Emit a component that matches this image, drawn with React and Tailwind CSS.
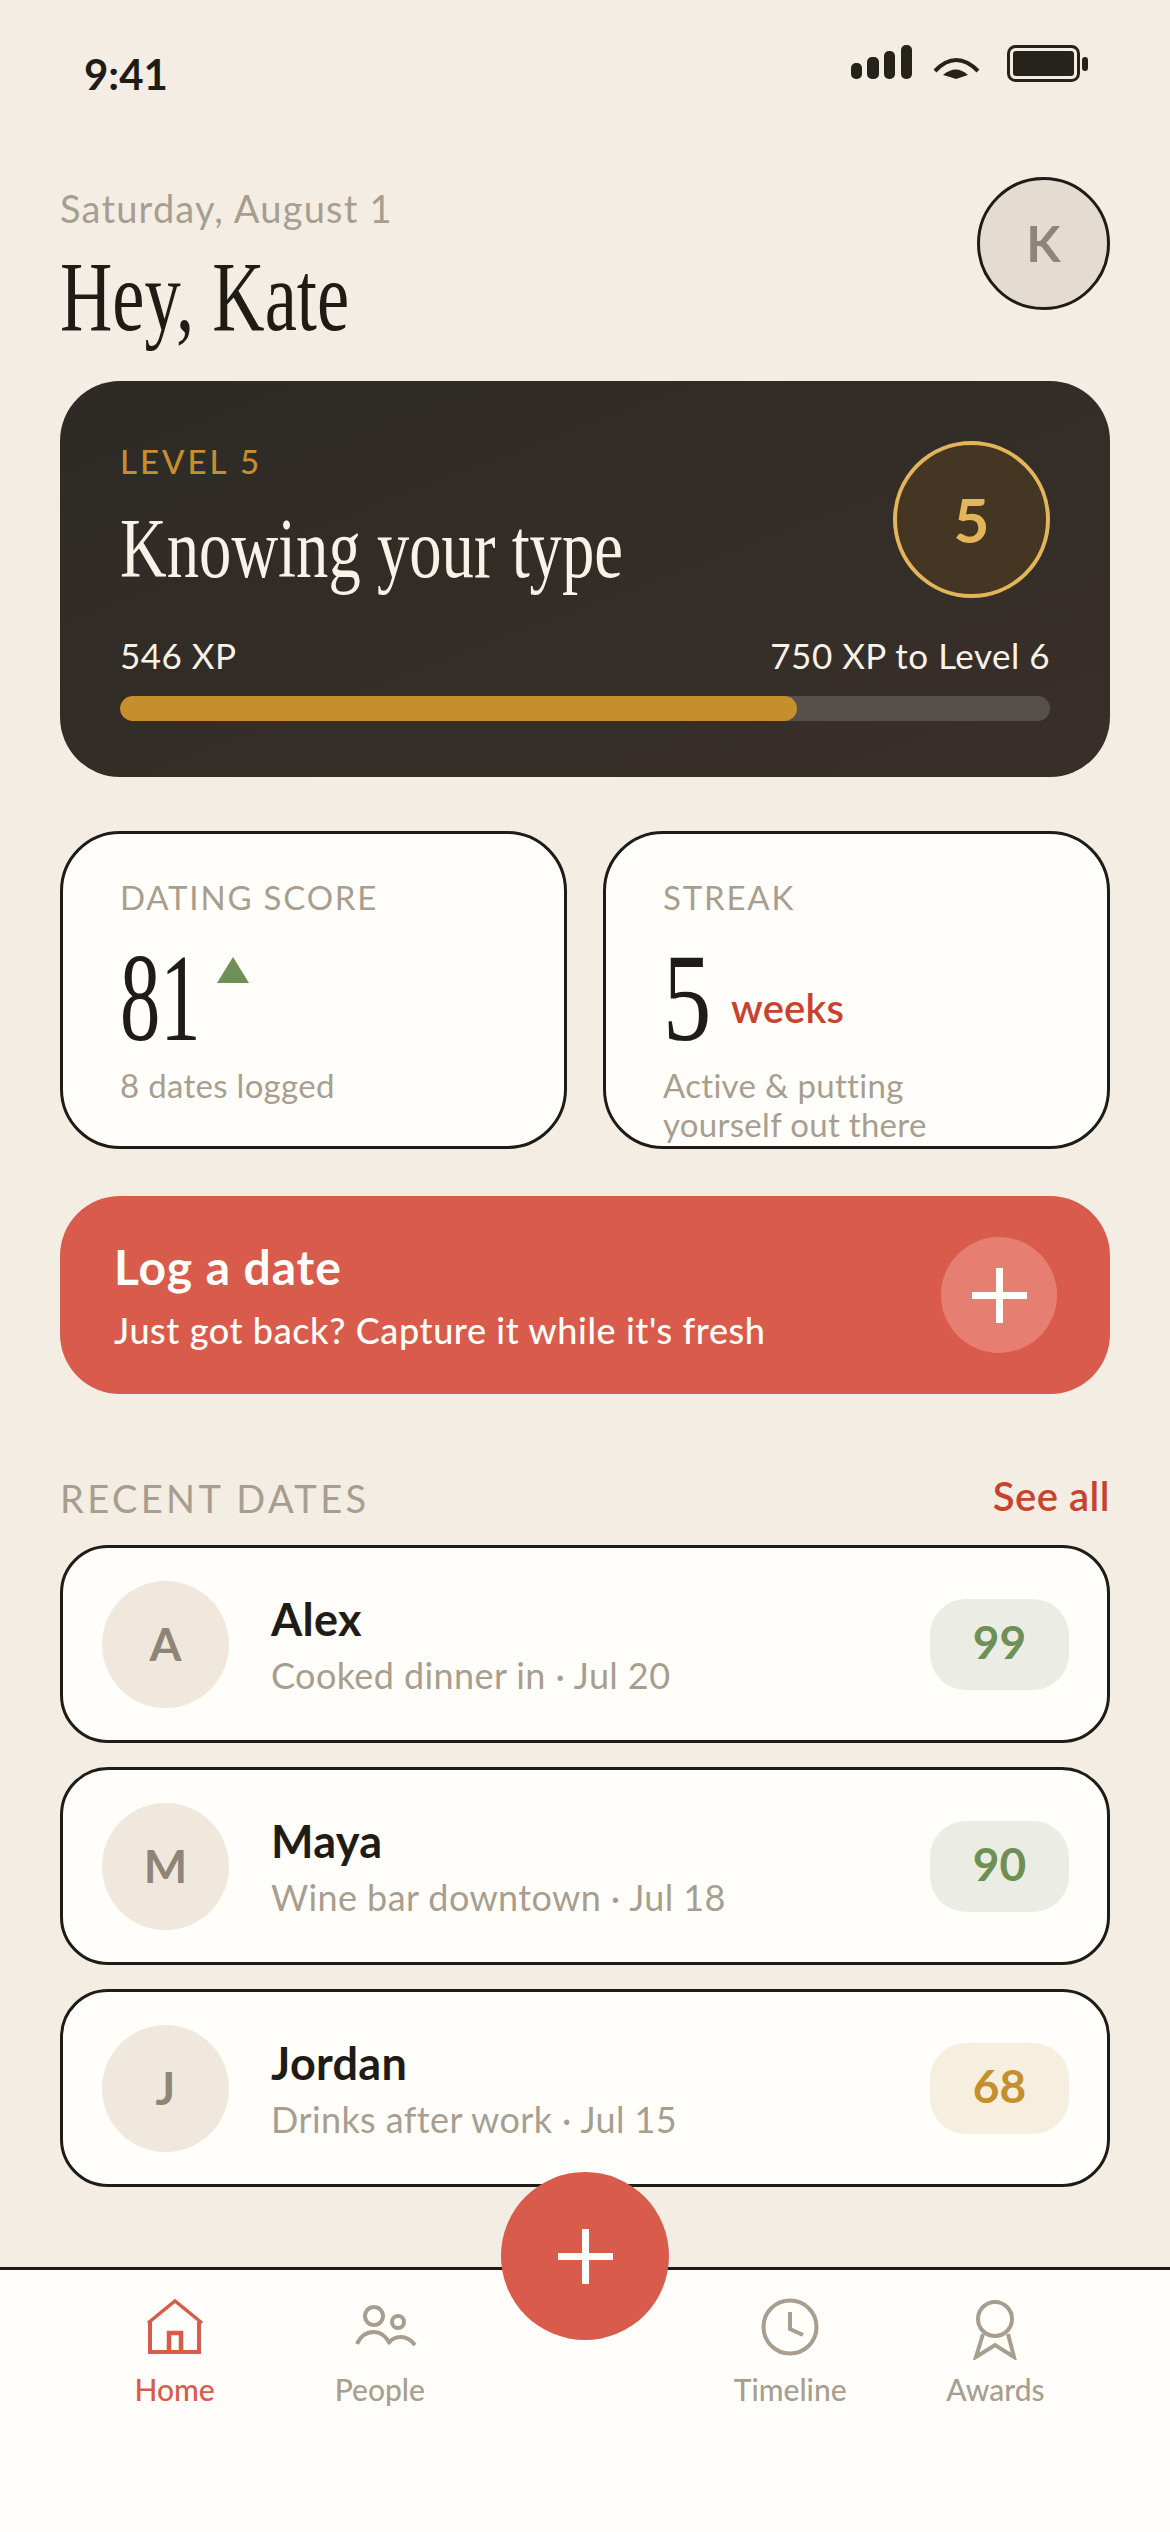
const sans = "font-['Lato','Liberation_Sans',sans-serif]";
const serif = "font-['Liberation_Serif',serif]";

function Serif({ className = "", children }) {
  return <span className={`${serif} inline-block origin-left whitespace-nowrap ${className}`}>{children}</span>;
}

function StatusIcons() {
  return (
    <svg width="240" height="40" viewBox="0 0 240 40" className="text-[#26221c]">
      <rect x="2" y="18" width="11" height="16" rx="5" fill="currentColor" />
      <rect x="18" y="12" width="12" height="22" rx="5" fill="currentColor" />
      <rect x="35" y="6" width="11" height="28" rx="5" fill="currentColor" />
      <rect x="52" y="0" width="11" height="34" rx="5" fill="currentColor" />
      <path d="M86 26 Q107 4 129 26" fill="none" stroke="currentColor" strokeWidth="4" />
      <path d="M94 30 Q107 19 119 30 L113 32 L107 34 L101 32 Z" fill="currentColor" />
      <rect x="159.500" y="1.500" width="70" height="34" rx="7" fill="none" stroke="currentColor" strokeWidth="3" />
      <rect x="164" y="6" width="61" height="25" rx="3" fill="currentColor" />
      <rect x="233" y="12" width="6" height="14" rx="3" fill="currentColor" />
    </svg>
  );
}

function Plus() {
  return (
    <svg width="55" height="55" viewBox="0 0 55 55" fill="none" stroke="#fffefa" strokeWidth="7">
      <path d="M27.500 0V55M0 27.500H55" />
    </svg>
  );
}

function HomeIcon() {
  return (
    <svg width="64" height="64" viewBox="0 0 64 64" fill="none" stroke="#d95b4b" strokeWidth="4">
      <path d="M5 27 L32 5 L59 27" strokeWidth="3.500" />
      <path d="M7 26 V56 H56 V26" />
      <path d="M26 56 V37 H38 V56" strokeWidth="4.500" />
    </svg>
  );
}
function PeopleIcon() {
  return (
    <svg width="64" height="64" viewBox="0 0 64 64" fill="none" stroke="#a89e90" strokeWidth="4" className="overflow-visible">
      <circle cx="26" cy="20" r="9" />
      <circle cx="50" cy="26" r="6" />
      <path d="M9 48 C13 39 20 36 26 36 C32 36 38 40 42 48" />
      <path d="M41 46 C45 42 49 41 53 41 C59 41 63 44 67 49" />
    </svg>
  );
}
function ClockIcon() {
  return (
    <svg width="64" height="64" viewBox="0 0 64 64" fill="none" stroke="#a89e90" strokeWidth="4">
      <circle cx="32" cy="31" r="26.500" />
      <path d="M32 16 V33 L45 39" />
    </svg>
  );
}
function AwardIcon() {
  return (
    <svg width="64" height="64" viewBox="0 0 64 64" fill="none" stroke="#a89e90" strokeWidth="4">
      <circle cx="32" cy="23" r="17" />
      <path d="M20 38 L13 61 L32 49 L51 61 L45 38" />
    </svg>
  );
}

function StatCard({ label, children, note }) {
  return (
    <div className="h-[318px] flex-1 overflow-hidden rounded-[60px] border-[3px] border-[#1f1b16] bg-[#fffefa] pl-[57px] pr-4 pt-[40px]">
      <div className="text-[33px] leading-[46px] tracking-[1.800px] text-[#a89e90]">{label}</div>
      <div className="mt-[20px] flex h-[104px] items-start">{children}</div>
      <div className="mt-[22px] text-[33px] leading-[39px] tracking-[0.300px] text-[#a89e90]">{note}</div>
    </div>
  );
}

function DateRow({ initial, name, detail, score, pill, tone }) {
  return (
    <div className="flex h-[198px] items-center rounded-[48px] border-[3px] border-[#1f1b16] bg-[#fffefa] pl-[39px] pr-[38px]">
      <div className="flex h-[127px] w-[127px] items-center justify-center rounded-full bg-[#f0e8dc] pb-[2px] text-[46px] font-bold text-[#8f8577]">{initial}</div>
      <div className="ml-[42px] flex-1">
        <div className="text-[45px] font-bold leading-[56px] tracking-[0.300px] text-[#1f1b16]">{name}</div>
        <div className="mt-[5px] text-[36px] leading-[46px] tracking-[0.400px] text-[#a89e90]">{detail}</div>
      </div>
      <div className={`flex h-[91px] w-[139px] items-center justify-center rounded-[36px] pb-[5px] text-[46px] font-bold ${pill} ${tone}`}>{score}</div>
    </div>
  );
}

function NavItem({ icon, label, active }) {
  return (
    <div className="flex flex-col items-center">
      {icon}
      <div className={`mt-[9px] text-[30px] font-medium leading-[40px] ${active ? "text-[#d95b4b]" : "text-[#a89e90]"}`}>{label}</div>
    </div>
  );
}

export default function App() {
  return (
    <div className={`${sans} flex h-[2532px] w-[1170px] flex-col overflow-hidden bg-[#f3ede4]`}>
      <div className="flex h-[177px] items-start justify-between pl-[84px] pr-[81px]">
        <div className="mt-[48px] text-[42px] font-bold leading-[52px] text-[#1f1b16]">9:41</div>
        <div className="mt-[45px] h-[40px]"><StatusIcons /></div>
      </div>

      <div className="flex h-[204px] items-start justify-between px-[60px]">
        <div className="pt-[8px]">
          <div className="text-[38px] leading-[46px] tracking-[1.200px] text-[#a89e90]">Saturday, August 1</div>
          <Serif className="mt-[11px] block scale-x-[0.725] text-[100px] leading-[110px] text-[#1f1b16]">Hey, Kate</Serif>
        </div>
        <div className="flex h-[133px] w-[133px] items-center justify-center rounded-full border-[3px] border-[#1f1b16] bg-[#e4dcd0] text-[50px] font-bold text-[#8f8577]">K</div>
      </div>

      <div className="mx-[60px] h-[396px] rounded-[60px] bg-gradient-to-br from-[#2d2a25] to-[#392f2a] px-[60px] pt-[60px]">
        <div className="flex items-start justify-between">
          <div>
            <div className="text-[33px] font-medium leading-[40px] tracking-[3px] text-[#c48f2c]">LEVEL 5</div>
            <Serif className="mt-[18px] block scale-x-[0.77] text-[84px] leading-[100px] text-[#f8f3e9]">Knowing your type</Serif>
          </div>
          <div className="flex h-[157px] w-[157px] items-center justify-center rounded-full border-[4px] border-[#e3b55b] bg-[#443622] text-[62px] font-bold text-[#e3b55b]">5</div>
        </div>
        <div className="mt-[34px] flex justify-between text-[35px] leading-[44px] tracking-[0.500px] text-[#f8f3e9]">
          <span>546 XP</span>
          <span>750 XP to Level 6</span>
        </div>
        <div className="mt-[19px] h-[25px] overflow-hidden rounded-full bg-[#574f4a]">
          <div className="h-full w-[72.800%] rounded-full bg-[#c48f2c]" />
        </div>
      </div>

      <div className="mx-[60px] mt-[54px] flex gap-[36px]">
        <StatCard label="DATING SCORE" note="8 dates logged">
          <Serif className="-mt-[2px] w-[92px] scale-x-[0.65] text-[124px] leading-[122px] text-[#1f1b16]">81</Serif>
          <svg width="32" height="26" viewBox="0 0 32 26" className="ml-[5px] mt-[17px]"><path d="M16 0 L32 26 H0 Z" fill="#6e8f56" /></svg>
        </StatCard>
        <StatCard label="STREAK" note={<>Active &amp; putting<br />yourself out there</>}>
          <Serif className="-mt-[2px] w-[68px] scale-x-[0.78] text-[124px] leading-[122px] text-[#1f1b16]">5</Serif>
          <span className="mt-[44px] text-[40px] font-semibold leading-[48px] tracking-[0.200px] text-[#c8432f]">weeks</span>
        </StatCard>
      </div>

      <div className="mx-[60px] mt-[47px] flex h-[198px] items-center justify-between rounded-[60px] bg-[#d95b4b] pl-[54px] pr-[53px]">
        <div>
          <div className="text-[48px] font-bold leading-[56px] tracking-[0.900px] text-[#fffefa]">Log a date</div>
          <div className="mt-[13px] text-[36px] font-medium leading-[44px] tracking-[0.600px] text-[#fffefa]">Just got back? Capture it while it's fresh</div>
        </div>
        <div className="flex h-[116px] w-[116px] items-center justify-center rounded-full bg-[#e67f72]"><Plus /></div>
      </div>

      <div className="mx-[60px] mt-[81px] flex h-[70px] items-start justify-between">
        <span className="text-[38px] leading-[46px] tracking-[3.400px] text-[#a89e90]">RECENT DATES</span>
        <span className="text-[40px] font-semibold leading-[42px] tracking-[0.500px] text-[#c8432f]">See all</span>
      </div>

      <div className="mx-[60px] flex flex-col gap-[24px]">
        <DateRow initial="A" name="Alex" detail="Cooked dinner in · Jul 20" score="99" pill="bg-[#ebede5]" tone="text-[#6e8f56]" />
        <DateRow initial="M" name="Maya" detail="Wine bar downtown · Jul 18" score="90" pill="bg-[#ebede5]" tone="text-[#6e8f56]" />
        <DateRow initial="J" name="Jordan" detail="Drinks after work · Jul 15" score="68" pill="bg-[#f6eedf]" tone="text-[#c48f2c]" />
      </div>

      <div className="relative mt-[80px] grid h-[265px] grid-cols-5 border-t-[3px] border-[#1f1b16] bg-[#fffefa] px-[72px] pt-[26px]">
        <NavItem icon={<HomeIcon />} label="Home" active />
        <NavItem icon={<PeopleIcon />} label="People" />
        <div />
        <NavItem icon={<ClockIcon />} label="Timeline" />
        <NavItem icon={<AwardIcon />} label="Awards" />
        <div className="absolute left-[501px] -top-[98px] flex h-[168px] w-[168px] items-center justify-center rounded-full bg-[#d95b4b]"><Plus /></div>
      </div>
    </div>
  );
}
